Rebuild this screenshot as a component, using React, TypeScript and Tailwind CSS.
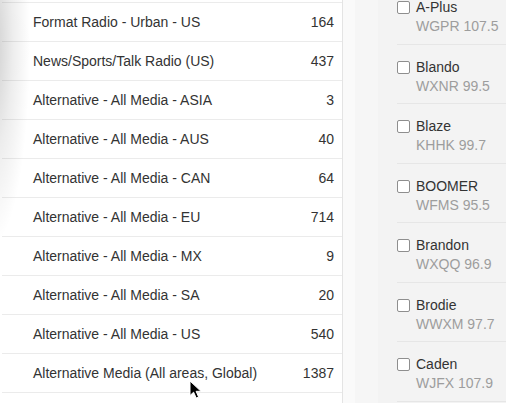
const formats = [
  { name: "Format Radio - Urban - US", count: 164 },
  { name: "News/Sports/Talk Radio (US)", count: 437 },
  { name: "Alternative - All Media - ASIA", count: 3 },
  { name: "Alternative - All Media - AUS", count: 40 },
  { name: "Alternative - All Media - CAN", count: 64 },
  { name: "Alternative - All Media - EU", count: 714 },
  { name: "Alternative - All Media - MX", count: 9 },
  { name: "Alternative - All Media - SA", count: 20 },
  { name: "Alternative - All Media - US", count: 540 },
  { name: "Alternative Media (All areas, Global)", count: 1387 },
];

const stations = [
  { name: "A-Plus", call: "WGPR 107.5" },
  { name: "Blando", call: "WXNR 99.5" },
  { name: "Blaze", call: "KHHK 99.7" },
  { name: "BOOMER", call: "WFMS 95.5" },
  { name: "Brandon", call: "WXQQ 96.9" },
  { name: "Brodie", call: "WWXM 97.7" },
  { name: "Caden", call: "WJFX 107.9" },
];

function Cursor() {
  return (
    <svg
      className="absolute left-[189px] top-[380px]"
      width="14"
      height="20"
      viewBox="0 0 14 20"
    >
      <path
        d="M1 1 L1 15.5 L4.6 12.2 L7.2 18 L9.6 17 L7.1 11.3 L12 11.3 Z"
        fill="#000"
        stroke="#fff"
        strokeWidth="1"
        strokeLinejoin="round"
      />
    </svg>
  );
}

export default function App() {
  return (
    <div className="relative flex h-[403px] w-[506px] overflow-hidden bg-[#f3f3f3] font-['Liberation_Sans',Arial,sans-serif] text-[14px] text-[#333]">
      {/* Format list */}
      <div className="relative w-[343px] shrink-0 border-r border-[#e4e4e4] bg-white">
        <div className="mt-[2px] ml-[2px] border-t border-[#ebebeb]">
          {formats.map((f) => (
            <div
              key={f.name}
              className="flex h-[39px] items-center justify-between border-b border-[#ebebeb] pl-[31px] pr-[8px]"
            >
              <span>{f.name}</span>
              <span>{f.count}</span>
            </div>
          ))}
        </div>
        <div className="pointer-events-none absolute inset-0 bg-[radial-gradient(ellipse_38px_200px_at_-8px_45px,rgba(0,0,0,0.2),rgba(0,0,0,0.07)_55%,transparent)]" />
      </div>

      {/* Gutter */}
      <div className="flex w-[35px] shrink-0">
        <div className="w-[12px] bg-[#fafafa]" />
        <div className="flex-1 bg-[#f6f6f6]" />
      </div>

      {/* Station list */}
      <div className="flex-1 bg-[#f3f3f3] pl-[19px]">
        <div className="mt-[-15px]">
          {stations.map((s) => (
            <div
              key={s.name}
              className="flex h-[59.5px] gap-[6px] border-b border-[#e6e6e6] pt-[13px]"
            >
              <div className="mt-[3px] h-[13px] w-[13px] shrink-0 rounded-[2px] border border-[#8e8e8e] bg-white" />
              <div className="flex flex-col leading-[19px]">
                <span className="text-[#333]">{s.name}</span>
                <span className="text-[#9d9d9d]">{s.call}</span>
              </div>
            </div>
          ))}
        </div>
      </div>

      <Cursor />
    </div>
  );
}
